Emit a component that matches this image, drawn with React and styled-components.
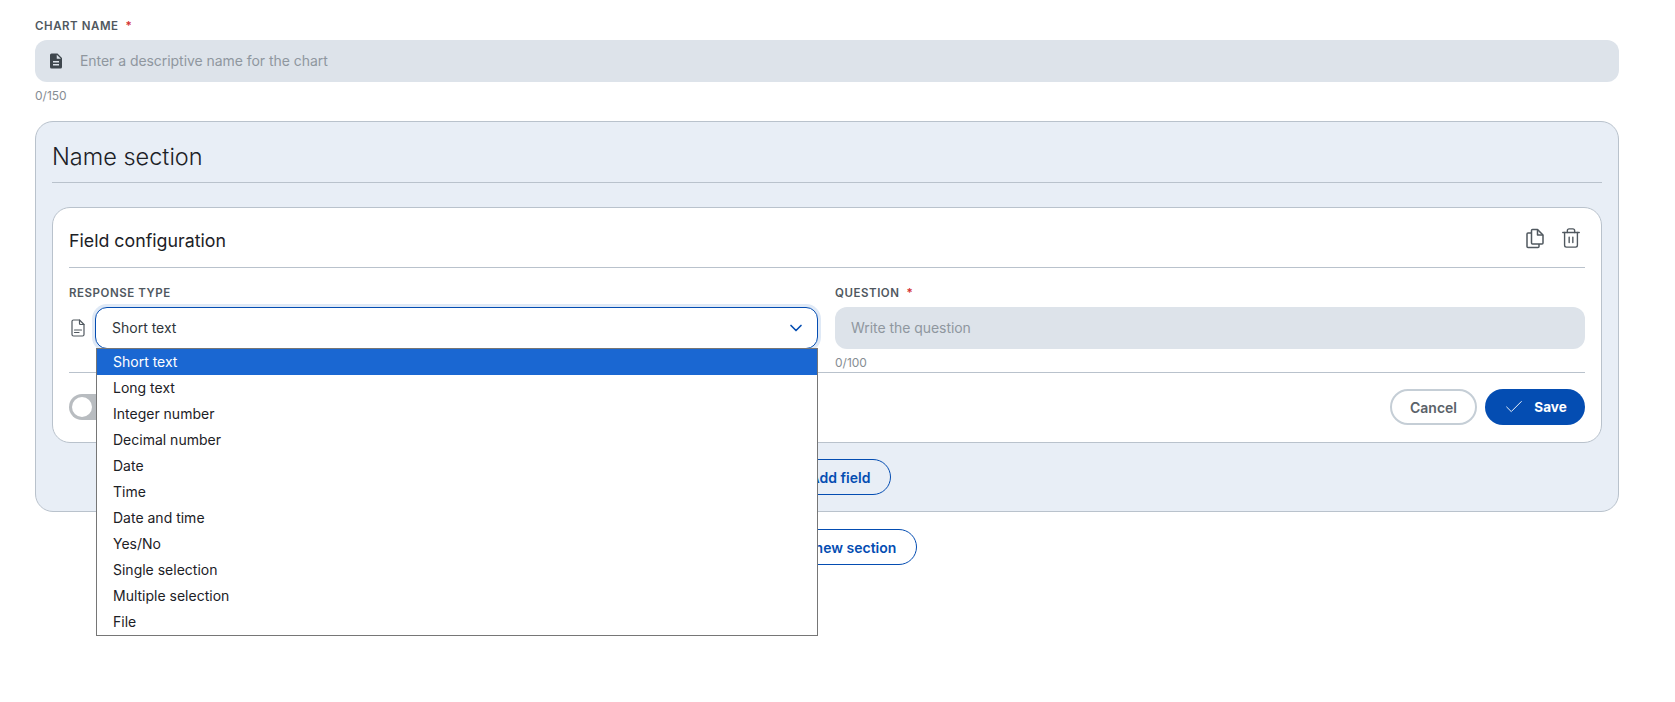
import React from 'react';
import styled, { createGlobalStyle } from 'styled-components';
import { ChevronDown, Plus, Check, Trash2 } from 'lucide-react';

const GlobalStyle = createGlobalStyle`
  * { box-sizing: border-box; }
  body {
    margin: 0;
    background: #fff;
    font-family: "Inter", "Liberation Sans", sans-serif;
    color: #1c2126;
  }
`;

const Page = styled.div`
  width: 1619px;
  min-height: 702px;
  padding: 17px 0 0 35px;
`;

const Label = styled.label`
  display: block;
  height: 17px;
  font-size: 11.5px;
  line-height: 19px;
  font-weight: 600;
  letter-spacing: 0.55px;
  color: #50585f;
  text-transform: uppercase;
`;

const Required = styled.span`
  color: #d32f2f;
  margin-left: 7px;
`;

const FilledInput = styled.div`
  display: flex;
  align-items: center;
  height: 42px;
  margin-top: 6px;
  padding: 0 12px;
  gap: 15px;
  border-radius: 12px;
  background: #dde3ea;
  font-size: 14px;
  letter-spacing: -0.05px;
  color: #8f979f;
`;

const Value = styled.span`
  padding-bottom: 2px;
`;

const Counter = styled.div`
  height: 20px;
  margin-top: 4px;
  font-size: 12px;
  line-height: 20px;
  color: #868d93;
`;

const Section = styled.section`
  margin-top: 15px;
  height: 391px;
  padding: 16px 16px 0;
  border: 1px solid #b9c2cc;
  border-radius: 18px;
  background: #e8eef6;
`;

const SectionTitle = styled.h2`
  margin: 0;
  height: 45px;
  font-size: 23.5px;
  line-height: 37px;
  font-weight: 300;
  color: #1c2126;
  border-bottom: 1px solid #b9c2cc;
`;

const Card = styled.div`
  position: relative;
  margin-top: 24px;
  height: 236px;
  padding: 0 16px;
  border: 1px solid #b9c2cc;
  border-radius: 18px;
  background: #fff;
`;

const CardHeader = styled.div`
  display: flex;
  align-items: center;
  justify-content: space-between;
  height: 60px;
  padding-right: 3px;
  border-bottom: 1px solid #b9c2cc;
`;

const CardTitle = styled.h3`
  margin: 0;
  padding-top: 5px;
  font-size: 17.8px;
  font-weight: 400;
  color: #1c2126;
`;

const IconRow = styled.div`
  display: flex;
  align-items: center;
  gap: 13px;
  color: #50585f;
`;

const Fields = styled.div`
  display: grid;
  grid-template-columns: 749px 750px;
  column-gap: 17px;
  height: 105px;
  padding-top: 16px;
  border-bottom: 1px solid #b9c2cc;
`;

const SelectRow = styled.div`
  position: relative;
  display: flex;
  align-items: center;
  gap: 8px;
  margin-top: 6px;
  color: #50585f;
`;

const SelectBox = styled.div`
  display: flex;
  flex: 1;
  align-items: center;
  justify-content: space-between;
  height: 42px;
  padding: 0 11px 0 16px;
  border: 1px solid #044db2;
  border-radius: 12px;
  background: #fff;
  box-shadow: 0 0 0 3px #dfe9f6;
  font-size: 14px;
  color: #30363b;
`;

const Menu = styled.ul`
  position: absolute;
  z-index: 5;
  top: 41px;
  left: 27px;
  right: 0;
  margin: 0;
  padding: 0;
  list-style: none;
  border: 1px solid #767676;
  background: #fff;
`;

const MenuItem = styled.li`
  height: 26px;
  padding-left: 16px;
  font-size: 14px;
  line-height: 26px;
  color: ${({ $active }) => ($active ? '#fff' : '#1c2126')};
  background: ${({ $active }) => ($active ? '#1a67d2' : 'transparent')};
`;

const QuestionInput = styled(FilledInput)`
  padding: 0 16px;
`;

const CardFooter = styled.div`
  display: flex;
  align-items: center;
  justify-content: space-between;
  height: 68px;
`;

const Toggle = styled.span`
  position: relative;
  display: block;
  width: 56px;
  height: 26px;
  border-radius: 13px;
  background: #b8bcc0;
`;

const Knob = styled.span`
  position: absolute;
  top: 3px;
  left: 3px;
  width: 20px;
  height: 20px;
  border-radius: 50%;
  background: #fff;
`;

const Actions = styled.div`
  display: flex;
  gap: 8px;
`;

const Pill = styled.button`
  display: inline-flex;
  align-items: center;
  justify-content: center;
  gap: 8px;
  height: 36px;
  border-radius: 18px;
  font: 600 14px "Inter", "Liberation Sans", sans-serif;
`;

const CancelButton = styled(Pill)`
  width: 87px;
  border: 2px solid #c5ced6;
  background: #fff;
  color: #5a6269;
`;

const SaveButton = styled(Pill)`
  width: 100px;
  gap: 9px;
  border: 0;
  background: #044db2;
  color: #fff;
  font-size: 13.5px;
  font-weight: 700;
`;

const OutlineButton = styled(Pill)`
  border: 1.5px solid #044db2;
  background: transparent;
  color: #044db2;
  padding: 0 20px;
`;

const AddRow = styled.div`
  display: flex;
  justify-content: center;
  margin-top: ${({ $gap }) => $gap}px;
`;

const options = [
  'Short text',
  'Long text',
  'Integer number',
  'Decimal number',
  'Date',
  'Time',
  'Date and time',
  'Yes/No',
  'Single selection',
  'Multiple selection',
  'File',
];

const FileFilled = () => (
  <svg width="18" height="18" viewBox="0 0 24 24" fill="#3f474e">
    <path d="M14 2H6a2 2 0 0 0-2 2v16a2 2 0 0 0 2 2h12a2 2 0 0 0 2-2V8l-6-6zm2 16H8v-2h8v2zm0-4H8v-2h8v2zm-3-5V3.5L18.5 9H13z" />
  </svg>
);

const FileOutline = () => (
  <svg width="18" height="22" viewBox="0 0 18 22" fill="none" stroke="currentColor" strokeWidth="1.2" strokeLinejoin="round" strokeLinecap="round">
    <path d="M10.5 3H4.5A1.5 1.5 0 0 0 3 4.5v13A1.5 1.5 0 0 0 4.5 19h9a1.5 1.5 0 0 0 1.5-1.5v-10z" />
    <path d="M10.5 3v3.5a1 1 0 0 0 1 1H15M5.5 13h7M5.5 15.5h4.5" />
  </svg>
);

const CopyIcon = () => (
  <svg width="24" height="24" viewBox="0 0 24 24" fill="none" stroke="currentColor" strokeWidth="1.5" strokeLinejoin="round">
    <path d="M9.5 3.5h5L20 9v8a1 1 0 0 1-1 1H9.5a1 1 0 0 1-1-1V4.5a1 1 0 0 1 1-1z" />
    <path d="M14.5 3.5V9H20" />
    <path d="M8.5 7H5a1 1 0 0 0-1 1v12.5a1 1 0 0 0 1 1h10a1 1 0 0 0 1-1V18" />
  </svg>
);

const App = () => (
  <>
    <GlobalStyle />
    <Page>
      <Label>
        Chart name<Required>*</Required>
      </Label>
      <FilledInput>
        <FileFilled />
        <Value>Enter a descriptive name for the chart</Value>
      </FilledInput>
      <Counter>0/150</Counter>
      <Section>
        <SectionTitle>Name section</SectionTitle>
        <Card>
          <CardHeader>
            <CardTitle>Field configuration</CardTitle>
            <IconRow>
              <CopyIcon />
              <Trash2 size={22} strokeWidth={1.5} />
            </IconRow>
          </CardHeader>
          <Fields>
            <div>
              <Label>Response type</Label>
              <SelectRow>
                <FileOutline />
                <SelectBox>
                  <Value>Short text</Value>
                  <ChevronDown size={20} color="#044db2" />
                </SelectBox>
                <Menu>
                  {options.map((option, i) => (
                    <MenuItem key={option} $active={i === 0}>
                      {option}
                    </MenuItem>
                  ))}
                </Menu>
              </SelectRow>
            </div>
            <div>
              <Label>
                Question<Required>*</Required>
              </Label>
              <QuestionInput>
                <Value>Write the question</Value>
              </QuestionInput>
              <Counter>0/100</Counter>
            </div>
          </Fields>
          <CardFooter>
            <Toggle>
              <Knob />
            </Toggle>
            <Actions>
              <CancelButton>Cancel</CancelButton>
              <SaveButton>
                <Check size={22} strokeWidth={1} />
                Save
              </SaveButton>
            </Actions>
          </CardFooter>
        </Card>
        <AddRow $gap={16}>
          <OutlineButton>
            <Plus size={18} />
            Add field
          </OutlineButton>
        </AddRow>
      </Section>
      <AddRow $gap={17}>
        <OutlineButton>
          <Plus size={18} />
          Add new section
        </OutlineButton>
      </AddRow>
    </Page>
  </>
);

export default App;
